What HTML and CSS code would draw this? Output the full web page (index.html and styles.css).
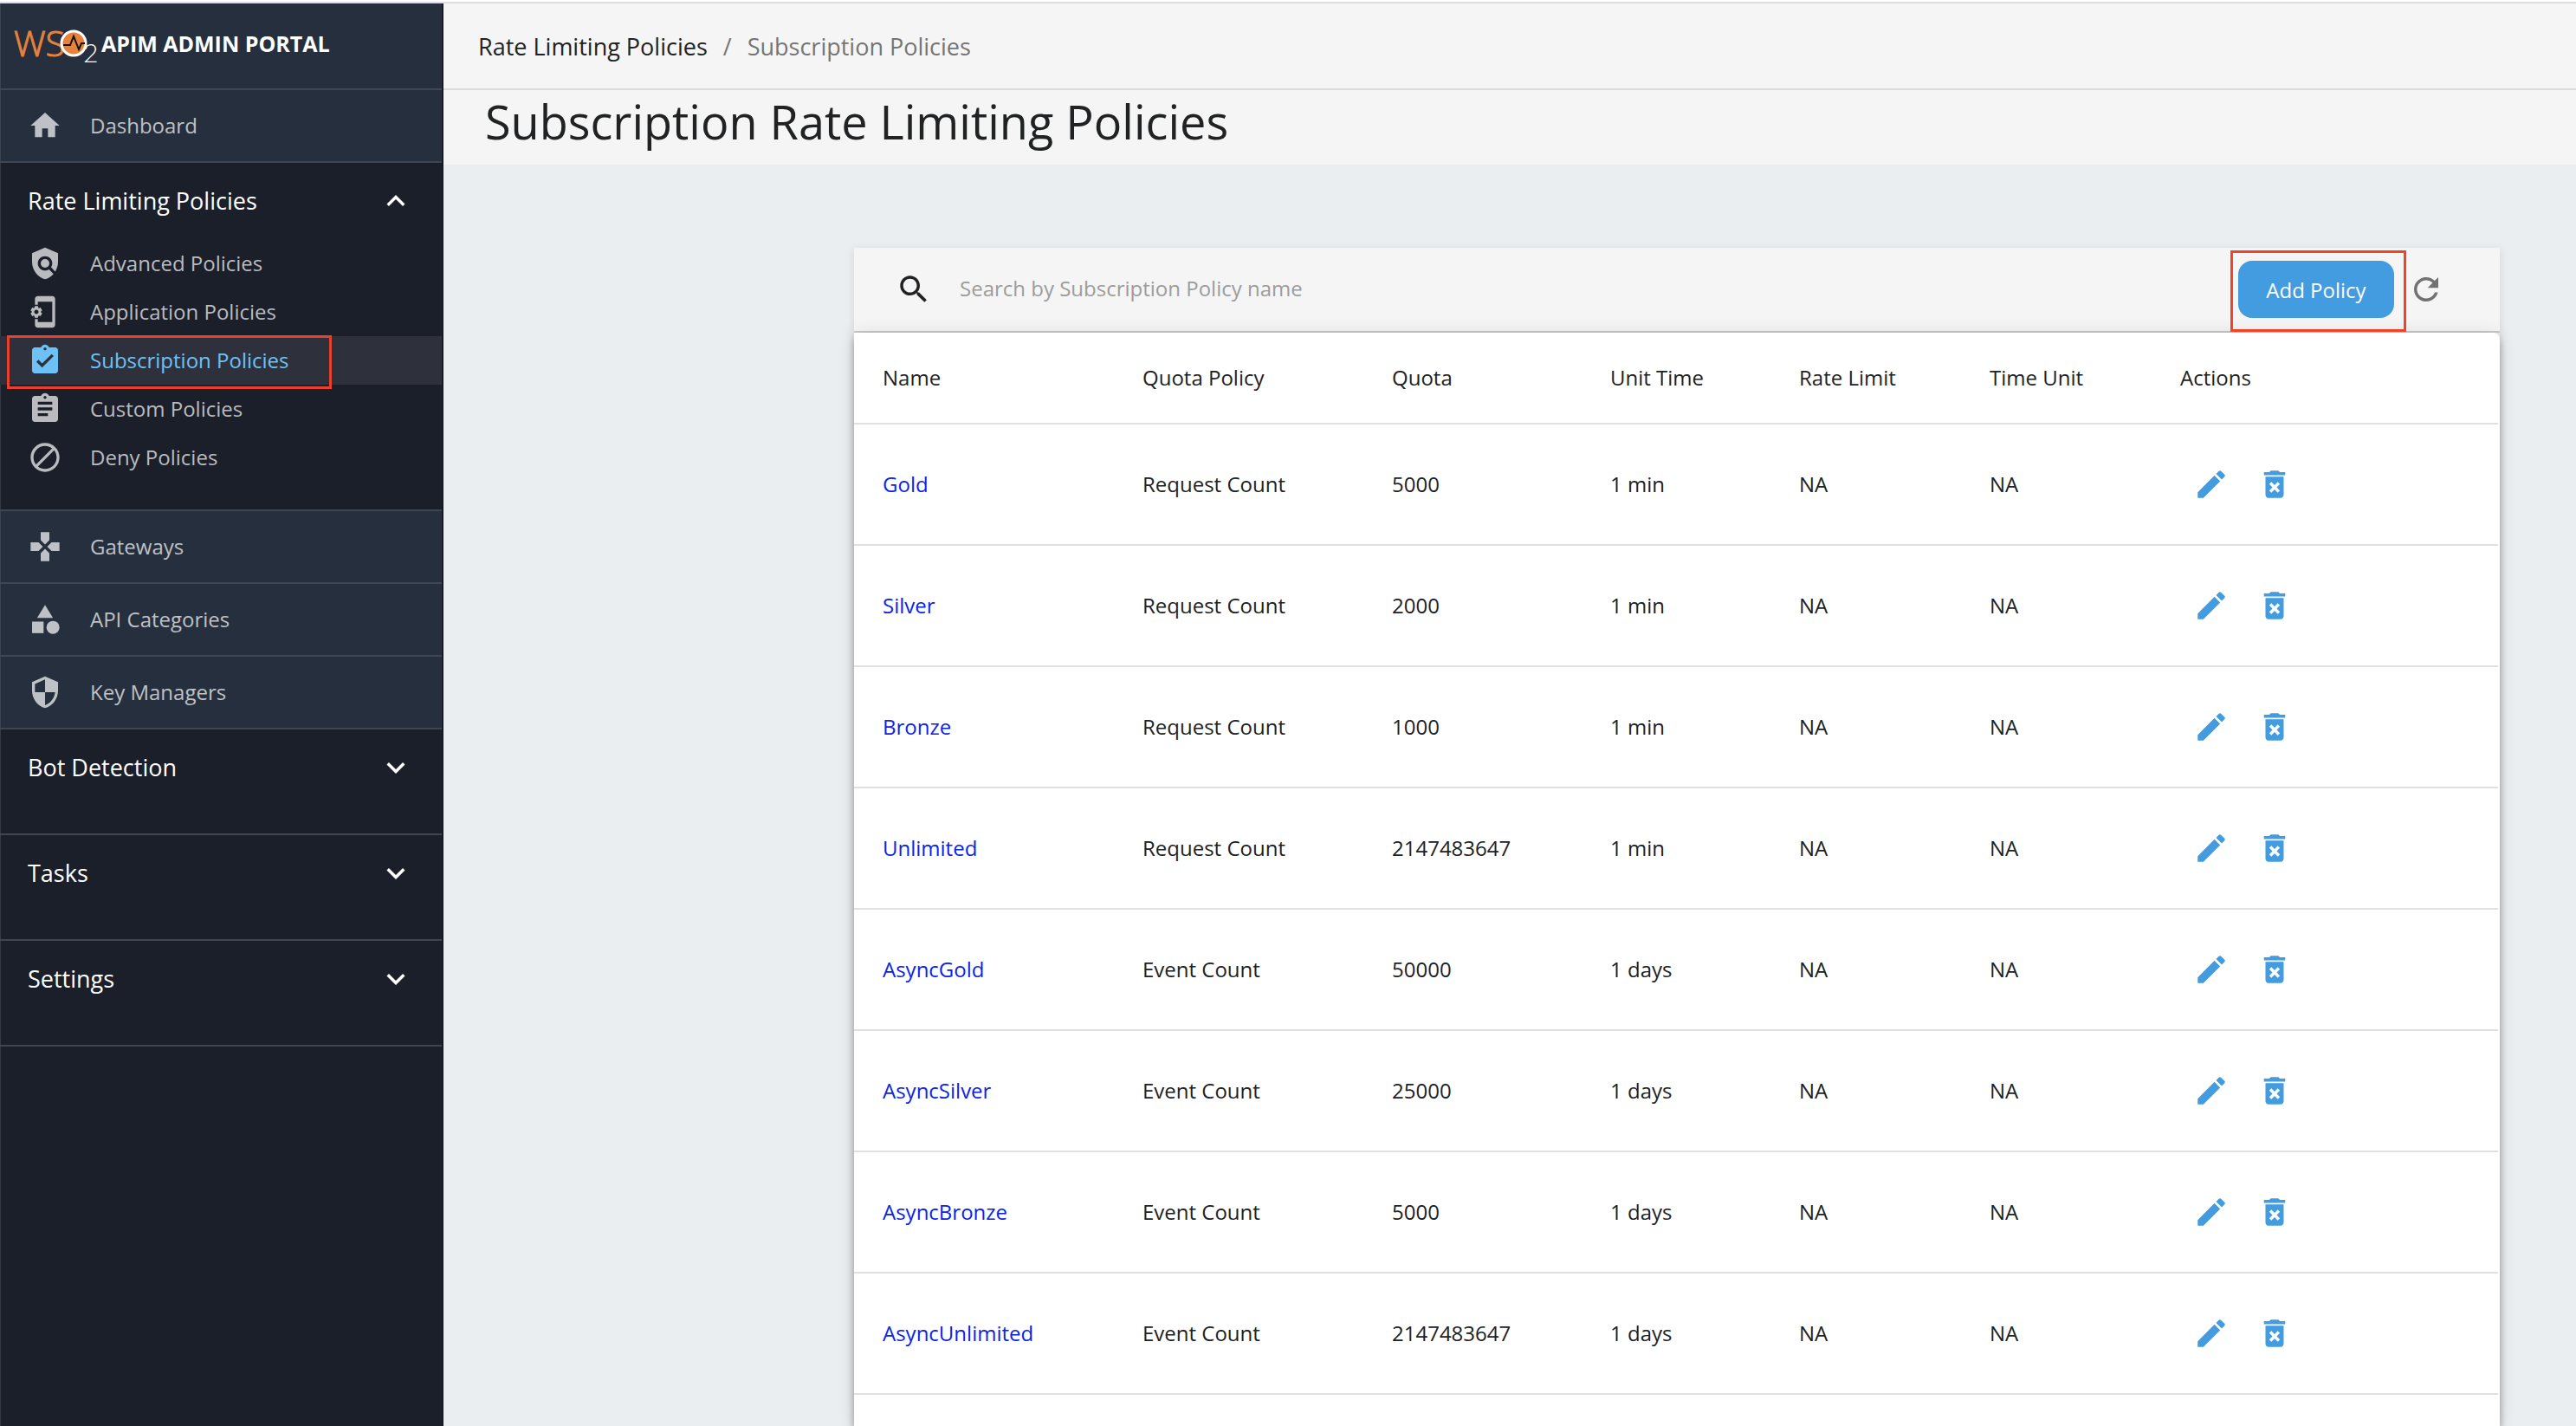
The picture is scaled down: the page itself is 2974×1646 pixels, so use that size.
FILE: index.html
```html
<!DOCTYPE html>
<html lang="en">
<head>
<meta charset="utf-8">
<title>APIM Admin Portal</title>
<link rel="stylesheet" href="styles.css">
</head>
<body>
<svg class="sprite" aria-hidden="true">
  <symbol id="home" viewBox="0 0 24 24"><path d="M10 20v-6h4v6h5v-8h3L12 3 2 12h3v8z"/></symbol>
  <symbol id="policy" viewBox="0 0 24 24"><path d="M21 5l-9-4-9 4v6c0 5.550 3.840 10.740 9 12 2.300-.560 4.330-1.900 5.880-3.710l-3.120-3.120c-1.940 1.290-4.580 1.070-6.290-.640-1.950-1.950-1.950-5.120 0-7.070 1.950-1.950 5.120-1.950 7.070 0 1.710 1.710 1.920 4.350.640 6.290l2.900 2.900C20.290 15.690 21 13.380 21 11V5z"/><circle cx="12" cy="12" r="3"/></symbol>
  <symbol id="appset" viewBox="0 0 24 24"><path d="M21.810 12.740l-.820-.630v-.220l.800-.630c.160-.120.200-.340.100-.510l-.850-1.480c-.070-.130-.210-.200-.350-.200-.050 0-.100.010-.150.030l-.950.380c-.080-.050-.110-.070-.190-.110l-.150-1.010c-.030-.210-.200-.360-.400-.360h-1.710c-.200 0-.370.150-.400.340l-.140 1.010c-.030.020-.070.030-.100.050l-.090.060-.950-.380c-.050-.020-.100-.030-.150-.030-.140 0-.270.070-.350.200l-.850 1.480c-.100.170-.060.390.100.510l.800.630v.230l-.800.630c-.160.120-.200.340-.100.510l.850 1.480c.070.130.210.200.350.200.050 0 .100-.010.150-.030l.950-.370c.080.050.120.070.200.110l.150 1.010c.030.200.200.340.400.340h1.710c.200 0 .370-.150.400-.340l.150-1.010c.030-.020.070-.030.100-.050l.090-.060.950.380c.050.020.100.030.150.030.140 0 .270-.070.350-.200l.850-1.480c.100-.170.060-.390-.100-.510zM18 13.500c-.830 0-1.500-.670-1.500-1.500s.670-1.500 1.500-1.500 1.500.670 1.500 1.500-.670 1.500-1.500 1.500zM17 17h2v4c0 1.100-.900 2-2 2H7c-1.100 0-2-.900-2-2V3c0-1.100.900-2 2-2h10c1.100 0 2 .900 2 2v4h-2V5H7v14h10v-2z" transform="matrix(-1 0 0 1 24 0)"/></symbol>
  <symbol id="turnedin" viewBox="0 0 24 24"><path d="M19 3h-4.180C14.400 1.840 13.300 1 12 1s-2.400.840-2.820 2H5c-1.100 0-2 .900-2 2v14c0 1.100.900 2 2 2h14c1.100 0 2-.900 2-2V5c0-1.100-.900-2-2-2zm-7 0c.550 0 1 .450 1 1s-.450 1-1 1-1-.450-1-1 .450-1 1-1zm-2 14l-4-4 1.410-1.410L10 14.170l6.590-6.590L18 9l-8 8z"/></symbol>
  <symbol id="assignment" viewBox="0 0 24 24"><path d="M19 3h-4.180C14.400 1.840 13.300 1 12 1s-2.400.840-2.820 2H5c-1.100 0-2 .900-2 2v14c0 1.100.900 2 2 2h14c1.100 0 2-.900 2-2V5c0-1.100-.900-2-2-2zm-7 0c.550 0 1 .450 1 1s-.450 1-1 1-1-.450-1-1 .450-1 1-1zm2 14H7v-2h7v2zm3-4H7v-2h10v2zm0-4H7V7h10v2z"/></symbol>
  <symbol id="block" viewBox="0 0 24 24"><path d="M12 2C6.480 2 2 6.480 2 12s4.480 10 10 10 10-4.480 10-10S17.520 2 12 2zM4 12c0-4.420 3.580-8 8-8 1.850 0 3.550.630 4.900 1.690L5.690 16.900C4.630 15.550 4 13.850 4 12zm8 8c-1.850 0-3.550-.630-4.900-1.690L18.310 7.100C19.370 8.450 20 10.150 20 12c0 4.420-3.580 8-8 8z"/></symbol>
  <symbol id="gamepad" viewBox="0 0 24 24"><path d="M15 7.500V2H9v5.500l3 3 3-3zM7.500 9H2v6h5.500l3-3-3-3zM9 16.500V22h6v-5.500l-3-3-3 3zM16.500 9l-3 3 3 3H22V9h-5.500z"/></symbol>
  <symbol id="category" viewBox="0 0 24 24"><path d="M12 2l-5.500 9h11z"/><circle cx="17.500" cy="17.500" r="4.500"/><path d="M3 13.500h8v8H3z"/></symbol>
  <symbol id="security" viewBox="0 0 24 24"><path d="M12 1L3 5v6c0 5.550 3.840 10.740 9 12 5.160-1.260 9-6.450 9-12V5l-9-4zm0 10.990h7c-.530 4.120-3.280 7.790-7 8.940V12H5V6.300l7-3.110v8.800z"/></symbol>
  <symbol id="less" viewBox="0 0 24 24"><path d="M12 8l-6 6 1.410 1.410L12 10.830l4.590 4.580L18 14z"/></symbol>
  <symbol id="more" viewBox="0 0 24 24"><path d="M16.590 8.590L12 13.170 7.410 8.590 6 10l6 6 6-6z"/></symbol>
  <symbol id="search" viewBox="0 0 24 24"><path d="M15.500 14h-.790l-.280-.270C15.410 12.590 16 11.110 16 9.500 16 5.910 13.090 3 9.500 3S3 5.910 3 9.500 5.910 16 9.500 16c1.610 0 3.090-.590 4.230-1.570l.270.280v.790l5 4.990L20.490 19l-4.990-5zm-6 0C7.010 14 5 11.990 5 9.500S7.010 5 9.500 5 14 7.010 14 9.500 11.990 14 9.500 14z"/></symbol>
  <symbol id="refresh" viewBox="0 0 24 24"><path d="M17.650 6.350C16.200 4.900 14.210 4 12 4c-4.420 0-7.990 3.580-7.990 8s3.570 8 7.990 8c3.730 0 6.840-2.550 7.730-6h-2.080c-.820 2.330-3.040 4-5.650 4-3.310 0-6-2.690-6-6s2.690-6 6-6c1.660 0 3.140.690 4.220 1.780L13 11h7V4l-2.350 2.350z"/></symbol>
  <symbol id="edit" viewBox="0 0 24 24"><path d="M3 17.250V21h3.750L17.810 9.940l-3.750-3.750L3 17.250zM20.710 7.040c.390-.390.390-1.020 0-1.410l-2.340-2.340c-.390-.390-1.020-.390-1.410 0l-1.830 1.830 3.750 3.750 1.830-1.830z"/></symbol>
  <symbol id="delete" viewBox="0 0 24 24"><path d="M6 19c0 1.100.900 2 2 2h8c1.100 0 2-.900 2-2V7H6v12zm2.460-7.120l1.410-1.410L12 12.590l2.120-2.120 1.410 1.410L13.410 14l2.120 2.120-1.410 1.410L12 15.410l-2.120 2.120-1.410-1.410L10.590 14l-2.130-2.120zM15.500 4l-1-1h-5l-1 1H5v2h14V4z"/></symbol>
</svg>
<div class="app">
  <aside class="sidebar">
    <a class="brand" href="#">
      <svg class="brand-logo" viewBox="0 0 98 44" aria-label="WSO2">
        <text class="logo-ws" x="0" y="34">WS</text>
        <text class="logo-two" x="80" y="41">2</text>
        <circle cx="69" cy="19" r="14" fill="#e8823a" stroke="#fff" stroke-width="3"/>
        <path d="M57 21h8l4-10 6 15 3-7h4" fill="none" stroke="#111" stroke-width="2"/>
      </svg>
      <span class="brand-name">APIM ADMIN PORTAL</span>
    </a>
    <nav>
      <a class="item single" href="#"><svg class="icon"><use href="#home"/></svg><span class="label">Dashboard</span></a>
      <section class="group">
        <button class="group-head" aria-expanded="true"><span class="label">Rate Limiting Policies</span><svg class="chevron"><use href="#less"/></svg></button>
        <a class="item" href="#"><svg class="icon"><use href="#policy"/></svg><span class="label">Advanced Policies</span></a>
        <a class="item" href="#"><svg class="icon"><use href="#appset"/></svg><span class="label">Application Policies</span></a>
        <a class="item selected" href="#" aria-current="page"><svg class="icon"><use href="#turnedin"/></svg><span class="label">Subscription Policies</span></a>
        <a class="item" href="#"><svg class="icon"><use href="#assignment"/></svg><span class="label">Custom Policies</span></a>
        <a class="item" href="#"><svg class="icon"><use href="#block"/></svg><span class="label">Deny Policies</span></a>
      </section>
      <a class="item single" href="#"><svg class="icon"><use href="#gamepad"/></svg><span class="label">Gateways</span></a>
      <a class="item single" href="#"><svg class="icon"><use href="#category"/></svg><span class="label">API Categories</span></a>
      <a class="item single" href="#"><svg class="icon"><use href="#security"/></svg><span class="label">Key Managers</span></a>
      <section class="group"><button class="group-head" aria-expanded="false"><span class="label">Bot Detection</span><svg class="chevron"><use href="#more"/></svg></button></section>
      <section class="group"><button class="group-head" aria-expanded="false"><span class="label">Tasks</span><svg class="chevron"><use href="#more"/></svg></button></section>
      <section class="group"><button class="group-head" aria-expanded="false"><span class="label">Settings</span><svg class="chevron"><use href="#more"/></svg></button></section>
    </nav>
  </aside>
  <div class="page">
    <nav class="breadcrumb" aria-label="Breadcrumb"><a href="#">Rate Limiting Policies</a><span>/</span><span>Subscription Policies</span></nav>
    <header class="title"><h1>Subscription Rate Limiting Policies</h1></header>
    <main class="card">
      <div class="toolbar">
        <label class="search-label" for="q" aria-label="Search"><svg class="tool-icon"><use href="#search"/></svg></label>
        <input class="search" id="q" type="text" placeholder="Search by Subscription Policy name">
        <div class="add-wrap"><button class="add">Add Policy</button></div>
        <button class="icon-button refresh" aria-label="Reload"><svg class="tool-icon"><use href="#refresh"/></svg></button>
      </div>
      <div class="paper">
        <table>
          <colgroup><col class="c-name"><col class="c-policy"><col class="c-quota"><col class="c-unit"><col class="c-rate"><col class="c-time"><col></colgroup>
          <thead><tr><th>Name</th><th>Quota Policy</th><th>Quota</th><th>Unit Time</th><th>Rate Limit</th><th>Time Unit</th><th>Actions</th></tr></thead>
          <tbody>
            <tr><td><a href="#">Gold</a></td><td>Request Count</td><td>5000</td><td>1 min</td><td>NA</td><td>NA</td><td class="action-cell"><div class="actions"><button class="icon-button" aria-label="Edit"><svg class="tool-icon"><use href="#edit"/></svg></button><button class="icon-button" aria-label="Delete"><svg class="tool-icon"><use href="#delete"/></svg></button></div></td></tr>
            <tr><td><a href="#">Silver</a></td><td>Request Count</td><td>2000</td><td>1 min</td><td>NA</td><td>NA</td><td class="action-cell"><div class="actions"><button class="icon-button" aria-label="Edit"><svg class="tool-icon"><use href="#edit"/></svg></button><button class="icon-button" aria-label="Delete"><svg class="tool-icon"><use href="#delete"/></svg></button></div></td></tr>
            <tr><td><a href="#">Bronze</a></td><td>Request Count</td><td>1000</td><td>1 min</td><td>NA</td><td>NA</td><td class="action-cell"><div class="actions"><button class="icon-button" aria-label="Edit"><svg class="tool-icon"><use href="#edit"/></svg></button><button class="icon-button" aria-label="Delete"><svg class="tool-icon"><use href="#delete"/></svg></button></div></td></tr>
            <tr><td><a href="#">Unlimited</a></td><td>Request Count</td><td>2147483647</td><td>1 min</td><td>NA</td><td>NA</td><td class="action-cell"><div class="actions"><button class="icon-button" aria-label="Edit"><svg class="tool-icon"><use href="#edit"/></svg></button><button class="icon-button" aria-label="Delete"><svg class="tool-icon"><use href="#delete"/></svg></button></div></td></tr>
            <tr><td><a href="#">AsyncGold</a></td><td>Event Count</td><td>50000</td><td>1 days</td><td>NA</td><td>NA</td><td class="action-cell"><div class="actions"><button class="icon-button" aria-label="Edit"><svg class="tool-icon"><use href="#edit"/></svg></button><button class="icon-button" aria-label="Delete"><svg class="tool-icon"><use href="#delete"/></svg></button></div></td></tr>
            <tr><td><a href="#">AsyncSilver</a></td><td>Event Count</td><td>25000</td><td>1 days</td><td>NA</td><td>NA</td><td class="action-cell"><div class="actions"><button class="icon-button" aria-label="Edit"><svg class="tool-icon"><use href="#edit"/></svg></button><button class="icon-button" aria-label="Delete"><svg class="tool-icon"><use href="#delete"/></svg></button></div></td></tr>
            <tr><td><a href="#">AsyncBronze</a></td><td>Event Count</td><td>5000</td><td>1 days</td><td>NA</td><td>NA</td><td class="action-cell"><div class="actions"><button class="icon-button" aria-label="Edit"><svg class="tool-icon"><use href="#edit"/></svg></button><button class="icon-button" aria-label="Delete"><svg class="tool-icon"><use href="#delete"/></svg></button></div></td></tr>
            <tr><td><a href="#">AsyncUnlimited</a></td><td>Event Count</td><td>2147483647</td><td>1 days</td><td>NA</td><td>NA</td><td class="action-cell"><div class="actions"><button class="icon-button" aria-label="Edit"><svg class="tool-icon"><use href="#edit"/></svg></button><button class="icon-button" aria-label="Delete"><svg class="tool-icon"><use href="#delete"/></svg></button></div></td></tr>
          </tbody>
        </table>
      </div>
    </main>
  </div>
</div>
</body>
</html>
```
FILE: styles.css
```css
*, *::before, *::after { box-sizing: border-box; }

body {
  margin: 0;
  padding-top: 2px;
  min-height: 100vh;
  display: flex;
  flex-direction: column;
  background: #fff;
  color: #212223;
  font-family: "Open Sans", "Noto Sans", sans-serif;
  font-size: 24px;
}

a { color: inherit; text-decoration: none; }
button, input { font: inherit; color: inherit; border: 0; background: none; padding: 0; margin: 0; }
button { cursor: pointer; }
svg { display: block; fill: currentColor; flex: none; }
.sprite { position: absolute; width: 0; height: 0; }

.app {
  flex: 1;
  display: flex;
  border-top: 2px solid #dcdce1;
}

/* Sidebar */
.sidebar {
  flex: none;
  width: 512px;
  background: #1a1f2a;
  border-right: 2px solid #151a26;
  box-shadow: inset 1px 0 0 #343a46;
}
.brand {
  display: flex;
  align-items: center;
  gap: 3px;
  height: 100px;
  padding: 0 16px;
  background: #262f3e;
  border-bottom: 2px solid #404753;
  box-shadow: inset 1px 0 0 #3b4351;
  color: #fff;
}
.brand-logo { width: 98px; height: 44px; overflow: visible; }
.logo-ws { font: 300 41px "Open Sans", sans-serif; fill: #e8823a; stroke: #e8823a; stroke-width: 1px; }
.logo-two { font: 300 30px Lato, sans-serif; fill: #fff; }
.brand-name {
  padding-bottom: 6px;
  font-size: 25px;
  font-weight: 700;
  line-height: 40px;
  white-space: nowrap;
}

.item {
  position: relative;
  display: flex;
  align-items: center;
  gap: 32px;
  height: 56px;
  padding-left: 32px;
  color: #babbbf;
}
.label { padding-bottom: 2px; }
.icon { width: 40px; height: 40px; }
.single {
  height: 84px;
  background: #262f3e;
  border-bottom: 2px solid #404753;
  box-shadow: inset 1px 0 0 #3b4351;
  color: #bec1c5;
}
.selected { background: #2e313c; color: #6dc1f5; }
.selected::after {
  content: "";
  position: absolute;
  top: -1px;
  left: 8px;
  width: 375px;
  height: 62px;
  border: 3px solid #e8402a;
  z-index: 1;
}
.group { padding-bottom: 32px; border-bottom: 2px solid #404550; }
.group-head {
  display: flex;
  align-items: center;
  justify-content: space-between;
  width: 100%;
  height: 88px;
  padding: 0 32px;
  color: #fff;
  font-size: 27px;
}
.chevron { width: 42px; height: 42px; }

/* Page */
.page {
  flex: 1;
  min-width: 0;
  display: flex;
  flex-direction: column;
  background: #eaeef1;
}
.breadcrumb {
  display: flex;
  align-items: center;
  gap: 18px;
  height: 100px;
  padding-left: 40px;
  background: #f5f5f5;
  border-bottom: 2px solid #dcdcdc;
  font-size: 27px;
  color: #757575;
}
.breadcrumb a { color: #212223; }
.title { display: flex; align-items: center; height: 86px; padding: 0 0 14px 48px; background: #f5f5f5; }
h1 { margin: 0; font-size: 54px; font-weight: 400; line-height: 72px; }

.card {
  flex: 1;
  display: flex;
  flex-direction: column;
  margin: 96px 88px 0 474px;
  box-shadow: 0 2px 10px rgba(0, 0, 0, .1);
}
.toolbar {
  display: flex;
  align-items: center;
  height: 98px;
  padding: 0 64px 0 48px;
  background: #f5f5f5;
  border-bottom: 2px solid #c8c8c8;
}
.tool-icon { width: 42px; height: 42px; }
.search-label { margin-right: 32px; }
.search { flex: 1; min-width: 0; height: 64px; padding-bottom: 3px; outline: 0; }
.search::placeholder { color: #9c9c9c; opacity: 1; }
.add-wrap { position: relative; margin-right: 16px; }
.add-wrap::after {
  content: "";
  position: absolute;
  inset: -12px -14px -16px -9px;
  border: 3px solid #ee4428;
  pointer-events: none;
  z-index: 1;
}
.add {
  display: block;
  width: 180px;
  height: 66px;
  border-radius: 16px;
  background: #439be0;
  color: #fff;
}
.refresh { color: #727272; }

.paper {
  flex: 1;
  padding-right: 2px;
  background: #fff;
  border-radius: 0 8px 0 0;
  box-shadow: 0 4px 8px -2px rgba(0, 0, 0, .2), 0 8px 10px rgba(0, 0, 0, .14), 0 2px 20px rgba(0, 0, 0, .12);
}
table { width: 100%; table-layout: fixed; border-collapse: separate; border-spacing: 0; }
.c-name { width: 300px; }
.c-policy { width: 288px; }
.c-quota { width: 252px; }
.c-unit { width: 218px; }
.c-rate, .c-time { width: 220px; }
th, td {
  height: 140px;
  padding: 0 0 2px 33px;
  border-bottom: 2px solid #e0e0e0;
  font-weight: 400;
  text-align: left;
  vertical-align: middle;
}
th { height: 106px; }
td a { color: #0b24e8; }
.action-cell { padding-bottom: 0; }
.actions { display: flex; gap: 31px; padding-left: 15px; color: #439be0; }
```
